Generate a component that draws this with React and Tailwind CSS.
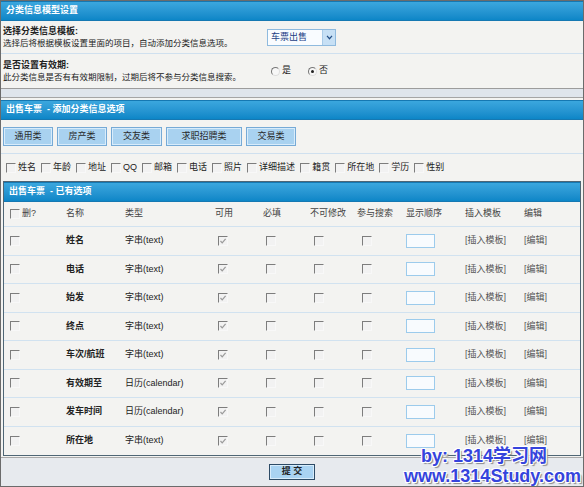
import React from "react";

const font = "font-['Liberation_Sans','Noto_Sans_CJK_SC',sans-serif]";

function Cb({ checked }) {
  return (
    <span className="relative inline-block w-[10px] h-[10px] shrink-0 border border-t-[#7d7d7d] border-l-[#7d7d7d] border-r-[#f8f8f8] border-b-[#f8f8f8] bg-[#f2f2f2]">
      {checked && (
        <svg viewBox="0 0 8 8" className="absolute left-0 top-0 w-[8px] h-[8px]">
          <path d="M1.5 4 L3.2 5.8 L6.6 1.8" fill="none" stroke="#9a9a9a" strokeWidth="1.2" />
        </svg>
      )}
    </span>
  );
}

function Radio({ on }) {
  return (
    <span className="relative inline-block w-[9px] h-[9px] rounded-full border border-t-[#777] border-l-[#777] border-r-[#ddd] border-b-[#ddd] bg-[#f7f7f7]">
      {on && <span className="absolute left-[2px] top-[2px] w-[3px] h-[3px] rounded-full bg-[#222]"></span>}
    </span>
  );
}

function Bar({ children }) {
  return (
    <div className="h-[20px] flex items-center pl-[5px] bg-gradient-to-b from-[#3ba7de] to-[#0c86c7] border-y border-[#1578b2] text-white font-bold text-[9px]">
      {children}
    </div>
  );
}

const options = ["姓名", "年龄", "地址", "QQ", "邮箱", "电话", "照片", "详细描述", "籍贯", "所在地", "学历", "性别"];

const kinds = [
  { label: "通用类", w: "w-[50px]" },
  { label: "房产类", w: "w-[50px]" },
  { label: "交友类", w: "w-[51px]" },
  { label: "求职招聘类", w: "w-[76px]" },
  { label: "交易类", w: "w-[50px]" },
];

const fields = [
  { name: "姓名", type: "字串(text)" },
  { name: "电话", type: "字串(text)" },
  { name: "始发", type: "字串(text)" },
  { name: "终点", type: "字串(text)" },
  { name: "车次/航班", type: "字串(text)" },
  { name: "有效期至", type: "日历(calendar)" },
  { name: "发车时间", type: "日历(calendar)" },
  { name: "所在地", type: "字串(text)" },
];

const cols = "grid grid-cols-[56px_59px_90px_48px_47px_47px_49px_59px_59px_1fr] items-center pl-[6px]";

export default function App() {
  return (
    <div className={`${font} relative w-[584px] h-[487px] overflow-hidden border border-[#6b6b6b] bg-[#f3f3f1] text-[#222]`}>
      {/* section 1 */}
      <Bar>分类信息模型设置</Bar>
      <div className="h-[32px] flex items-center">
        <div className="w-[266px] pl-[2px]">
          <div className="text-[9px] font-bold leading-[12px]">选择分类信息模板:</div>
          <div className="text-[8.5px] leading-[12px]">选择后将根据模板设置里面的项目，自动添加分类信息选项。</div>
        </div>
        <div className="w-[69px] h-[17px] flex border border-[#8fbade] bg-[#f9fcff]">
          <span className="flex-1 pl-[3px] text-[9px] leading-[15px] text-[#1e3f86]">车票出售</span>
          <span className="w-[13px] flex items-center justify-center bg-[#c7e0f5] border-l border-[#a9cbe8]">
            <svg viewBox="0 0 8 6" className="w-[7px] h-[5px]">
              <path d="M1 1 L4 4.5 L7 1" fill="none" stroke="#234e86" strokeWidth="1.4" />
            </svg>
          </span>
        </div>
      </div>
      <div className="h-px bg-[#cfe0ef]"></div>
      <div className="h-[34px] flex items-center">
        <div className="w-[270px] pl-[2px]">
          <div className="text-[9px] font-bold leading-[12px]">是否设置有效期:</div>
          <div className="text-[8.5px] leading-[12px]">此分类信息是否有有效期限制，过期后将不参与分类信息搜索。</div>
        </div>
        <div className="flex items-center text-[9px] gap-[2px]">
          <Radio /> <span className="mr-[15px]">是</span>
          <Radio on /> <span>否</span>
        </div>
      </div>
      <div className="h-px bg-[#9c9c9c]"></div>
      <div className="h-[8px] bg-[#dfe5ec]"></div>
      <div className="h-px bg-[#a5a5a5]"></div>
      <div className="h-[2px]"></div>

      {/* section 2 */}
      <Bar>出售车票 &nbsp;- 添加分类信息选项</Bar>
      <div className="h-[33px] flex items-start pt-[7px] pl-[2px] gap-[4px]">
        {kinds.map((k) => (
          <div
            key={k.label}
            className={`${k.w} h-[19px] flex items-center justify-center border border-[#76aad6] bg-[#a9d2f0] shadow-[inset_0_0_0_1px_#d8ecfb] text-[9px] text-[#2a2a2a]`}
          >
            {k.label}
          </div>
        ))}
      </div>
      <div className="h-px bg-[#cfe0ef]"></div>
      <div className="h-[27px] flex items-center pl-[5px] gap-[5px] text-[9px]">
        {options.map((o) => (
          <div key={o} className="flex items-center">
            <Cb />
            <span className="ml-[2px]">{o}</span>
          </div>
        ))}
      </div>

      {/* section 3 */}
      <div className="mx-[2px] border border-[#4f6675]">
        <Bar>出售车票 &nbsp;- 已有选项</Bar>
        <div className={`${cols} h-[25px] border-b border-[#d1e2f0] text-[9px] text-[#444]`}>
          <div className="flex items-center gap-[2px]">
            <Cb />
            <span>删?</span>
          </div>
          <div>名称</div>
          <div>类型</div>
          <div>可用</div>
          <div>必填</div>
          <div>不可修改</div>
          <div>参与搜索</div>
          <div>显示顺序</div>
          <div>插入模板</div>
          <div>编辑</div>
        </div>
        {fields.map((f, i) => (
          <div
            key={f.name}
            className={`${cols} h-[28.5px] text-[9px] ${i < fields.length - 1 ? "border-b border-[#d1e2f0]" : ""}`}
          >
            <div className="flex"><Cb /></div>
            <div className="font-bold">{f.name}</div>
            <div className="text-[#222]">{f.type}</div>
            <div className="flex pl-[3px]"><Cb checked /></div>
            <div className="flex pl-[3px]"><Cb /></div>
            <div className="flex pl-[4px]"><Cb /></div>
            <div className="flex pl-[5px]"><Cb /></div>
            <div className="flex">
              <span className="w-[29px] h-[14px] border border-[#9ccbec] bg-[#f8fbfe]"></span>
            </div>
            <div className="text-[#555]">[插入模板]</div>
            <div className="text-[#555]">[编辑]</div>
          </div>
        ))}
      </div>

      {/* footer */}
      <div className="h-px"></div>
      <div className="h-px bg-[#a9a9a9]"></div>
      <div className="h-[28px] flex items-center justify-center bg-[#e7eaee]">
        <div className="w-[46px] h-[16px] flex items-center justify-center border border-[#2d4b66] bg-[#a9d3f2] shadow-[inset_0_0_0_1px_#d7ecfb] text-[9px] font-bold">
          提 交
        </div>
      </div>

      {/* watermark */}
      <div className="absolute left-[403px] bottom-0 w-[180px] font-bold text-[#3544dc] leading-[20px] [text-shadow:1px_1px_0_#fff,-1px_-1px_0_#fff,1px_-1px_0_#fff,-1px_1px_0_#fff,2px_2px_1px_#8a8a8a]">
        <div className="text-[18px] pl-[17px]">by: 1314学习网</div>
        <div className="text-[18px]">www.1314Study.com</div>
      </div>
    </div>
  );
}
